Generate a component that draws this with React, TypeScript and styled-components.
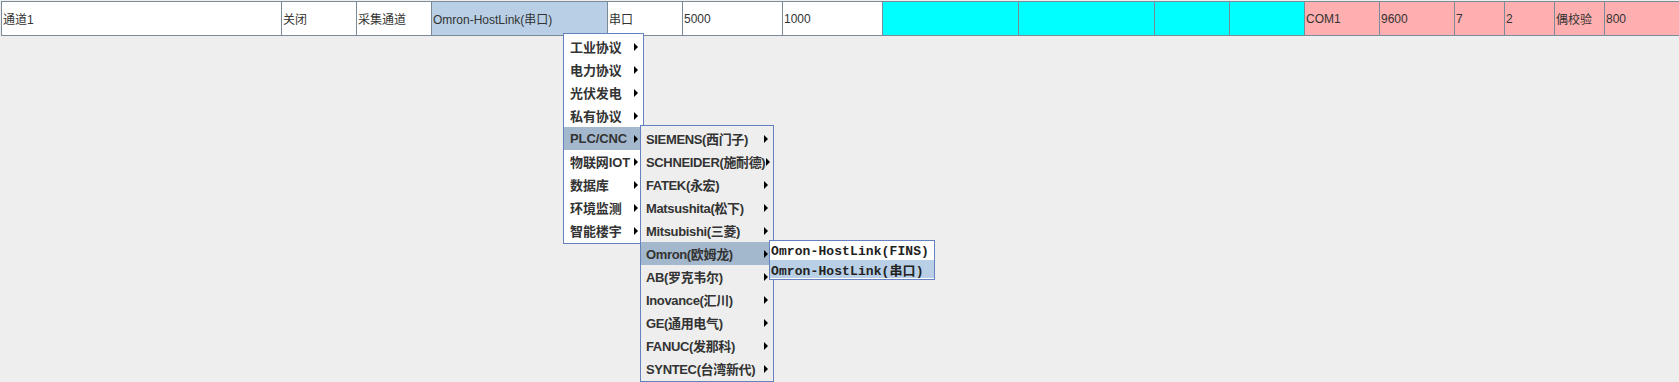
import React from "react";
import styled, { createGlobalStyle } from "styled-components";

const GlobalStyle = createGlobalStyle`
  html, body {
    margin: 0;
    padding: 0;
    background: #eeeeee;
    overflow: hidden;
  }
`;

const Page = styled.div`
  position: relative;
  width: 1679px;
  height: 382px;
  padding: 1px 0 0 1px;
  box-sizing: border-box;
  background: #eeeeee;
  font-family: "Liberation Sans", "Noto Sans CJK SC", sans-serif;
`;

const Row = styled.div`
  display: flex;
  height: 35px;
  border-top: 1px solid #7a8a99;
  border-left: 1px solid #7a8a99;
  box-sizing: border-box;
  width: max-content;
`;

const Cell = styled.div<{ $w: number; $bg?: string }>`
  width: ${(p) => p.$w}px;
  flex: none;
  box-sizing: border-box;
  border-right: 1px solid #7a8a99;
  border-bottom: 1px solid #7a8a99;
  background: ${(p) => p.$bg || "#ffffff"};
  display: flex;
  align-items: center;
  padding-left: 1px;
  font-size: 12px;
  color: #333333;
  white-space: nowrap;
  overflow: hidden;
`;

const Popup = styled.div<{ $x: number; $y: number; $w: number; $bg: string }>`
  position: absolute;
  left: ${(p) => p.$x}px;
  top: ${(p) => p.$y}px;
  width: ${(p) => p.$w}px;
  box-sizing: border-box;
  border: 1px solid #6382bf;
  background: ${(p) => p.$bg};
  padding: 1px 0;
`;

const Item = styled.div<{ $on?: boolean; $pad: number; $h: number; $onBg?: string; $tight?: boolean }>`
  height: ${(p) => p.$h}px;
  display: flex;
  align-items: center;
  gap: 1px;
  padding: 0 5px 0 ${(p) => p.$pad}px;
  background: ${(p) => (p.$on ? p.$onBg || "#a3b8cc" : "transparent")};
  font-size: 13px;
  font-weight: bold;
  letter-spacing: ${(p) => (p.$tight ? "-0.35px" : "-0.1px")};
  color: #333333;
  white-space: nowrap;
`;

const Label = styled.span`
  flex: 1;
`;

const MonoItem = styled(Item)`
  font-family: "Liberation Mono", "Noto Sans CJK SC", monospace;
  color: #222222;
  letter-spacing: 0.1px;
`;

const Arrow = () => (
  <svg width="4" height="8" viewBox="0 0 4 8" style={{ flex: "none" }}>
    <path d="M0 0 L4 4 L0 8 Z" fill="#000" />
  </svg>
);

const cells: { w: number; text: string; bg?: string }[] = [
  { w: 280, text: "通道1" },
  { w: 75, text: "关闭" },
  { w: 75, text: "采集通道" },
  { w: 176, text: "Omron-HostLink(串口)", bg: "#b8cfe5" },
  { w: 75, text: "串口" },
  { w: 100, text: "5000" },
  { w: 100, text: "1000" },
  { w: 136, text: "", bg: "#00ffff" },
  { w: 136, text: "", bg: "#00ffff" },
  { w: 75, text: "", bg: "#00ffff" },
  { w: 75, text: "", bg: "#00ffff" },
  { w: 75, text: "COM1", bg: "#ffafaf" },
  { w: 75, text: "9600", bg: "#ffafaf" },
  { w: 50, text: "7", bg: "#ffafaf" },
  { w: 50, text: "2", bg: "#ffafaf" },
  { w: 50, text: "偶校验", bg: "#ffafaf" },
  { w: 76, text: "800", bg: "#ffafaf" },
];

const protocols = ["工业协议", "电力协议", "光伏发电", "私有协议", "PLC/CNC", "物联网IOT", "数据库", "环境监测", "智能楼宇"];
const vendors = [
  "SIEMENS(西门子)",
  "SCHNEIDER(施耐德)",
  "FATEK(永宏)",
  "Matsushita(松下)",
  "Mitsubishi(三菱)",
  "Omron(欧姆龙)",
  "AB(罗克韦尔)",
  "Inovance(汇川)",
  "GE(通用电气)",
  "FANUC(发那科)",
  "SYNTEC(台湾新代)",
];
const drivers = ["Omron-HostLink(FINS)", "Omron-HostLink(串口)"];

export default function App() {
  return (
    <Page>
      <GlobalStyle />
      <Row>
        {cells.map((c, i) => (
          <Cell key={i} $w={c.w} $bg={c.bg}>
            {c.text}
          </Cell>
        ))}
      </Row>

      <Popup $x={563} $y={33} $w={81} $bg="#ffffff">
        {protocols.map((p) => (
          <Item key={p} $h={23} $pad={6} $on={p === "PLC/CNC"}>
            <Label>{p}</Label>
            <Arrow />
          </Item>
        ))}
      </Popup>

      <Popup $x={640} $y={125} $w={134} $bg="#eeeeee">
        {vendors.map((v) => (
          <Item key={v} $h={23} $pad={5} $tight $on={v === "Omron(欧姆龙)"}>
            <Label>{v}</Label>
            <Arrow />
          </Item>
        ))}
      </Popup>

      <Popup $x={769} $y={240} $w={166} $bg="#ffffff">
        {drivers.map((d) => (
          <MonoItem key={d} $h={18} $pad={1} $on={d.includes("串口")} $onBg="#b8cfe5">
            <Label>{d}</Label>
          </MonoItem>
        ))}
      </Popup>
    </Page>
  );
}
